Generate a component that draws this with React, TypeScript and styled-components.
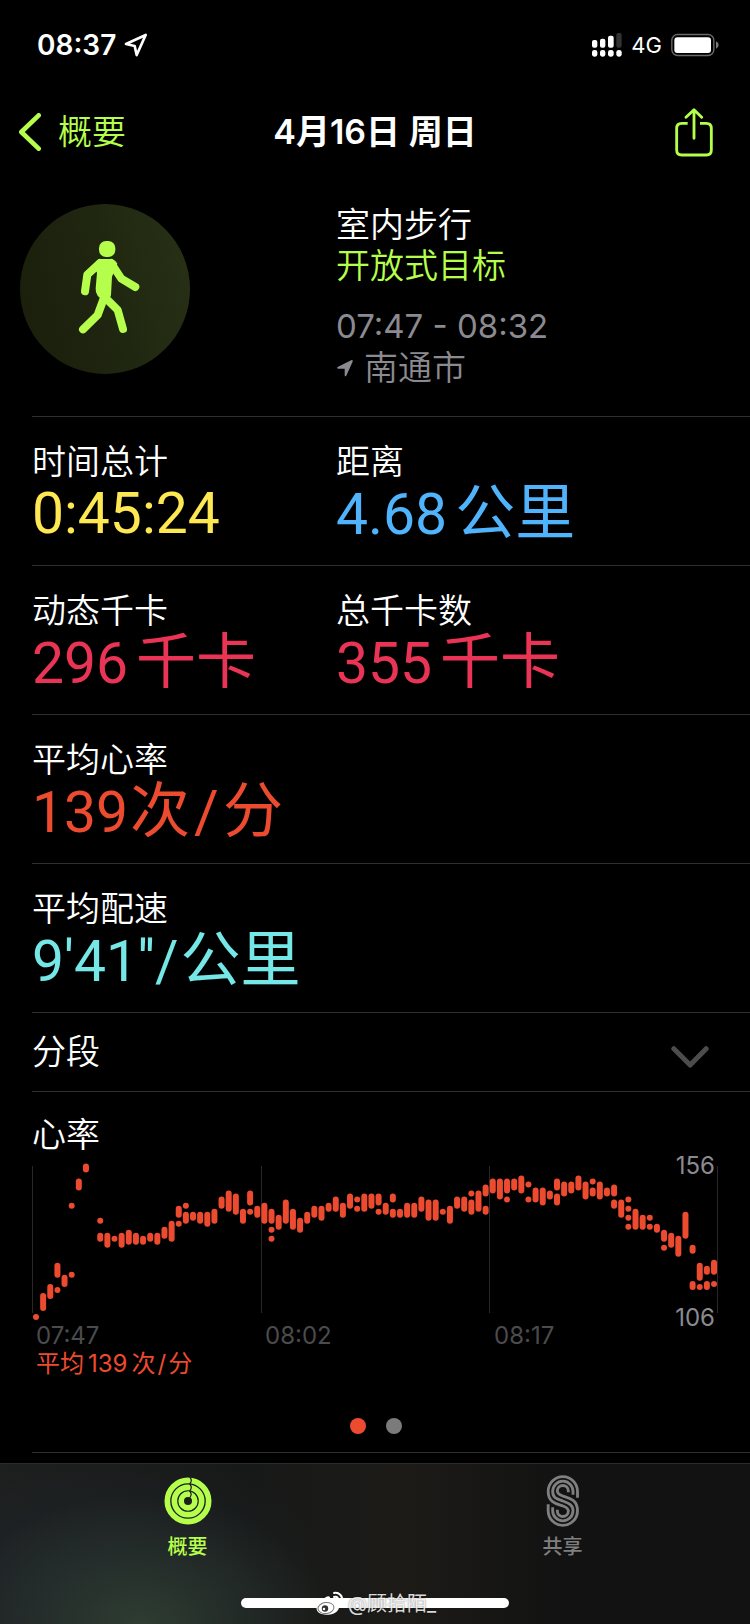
import React from "react";
import styled, { createGlobalStyle } from "styled-components";

const color = {
  lime: "#b5fe4b",
  white: "#ffffff",
  gray: "#8b8a90",
  dim: "#4b4b4d",
  line: "#2f2f31",
  yellow: "#fde752",
  blue: "#50b4fd",
  pink: "#e93455",
  red: "#ed4b2f",
  cyan: "#75e7e6",
};

const GlobalStyle = createGlobalStyle`
  * { box-sizing: border-box; }
  body {
    margin: 0;
    background: #000;
    color: #fff;
    font-family: Inter, "Noto Sans CJK SC", sans-serif;
    font-weight: 400;
  }
  button { font: inherit; border: 0; padding: 0; background: none; cursor: pointer; }
  h1, h2, p, dl, dt, dd { margin: 0; font-weight: inherit; }
`;

const Page = styled.div`
  min-height: 100vh;
  display: flex;
  flex-direction: column;
  background: #000;
`;

const StatusBar = styled.div`
  height: 90px;
  padding: 0 31px 0 37px;
  display: flex;
  align-items: center;
  justify-content: space-between;
`;

const StatusGroup = styled.div<{ $gap: number }>`
  display: flex;
  align-items: center;
  gap: ${(p) => p.$gap}px;
`;

const Clock = styled.span`
  font-size: 28px;
  font-weight: 600;
`;

const Network = styled.span`
  font-size: 22px;
  font-weight: 400;
`;

const NavBar = styled.header`
  height: 84px;
  padding: 0 19px;
  display: grid;
  grid-template-columns: 1fr auto 1fr;
  align-items: center;
`;

const BackLink = styled.a`
  display: flex;
  align-items: center;
  gap: 17px;
  color: ${color.lime};
  font-size: 34px;
  font-weight: 350;
  line-height: 40px;
  text-decoration: none;
`;

const Title = styled.h1`
  font-size: 34px;
  font-weight: 600;
  line-height: 40px;
`;

const ShareButton = styled.button`
  justify-self: end;
  margin-right: 18px;
  display: flex;
`;

const Summary = styled.section`
  padding: 30px 20px 28px;
  display: grid;
  grid-template-columns: 316px 1fr;
`;

const Badge = styled.div`
  width: 170px;
  height: 170px;
  border-radius: 50%;
  background: linear-gradient(75deg, #1a1e0a 0%, #1e240f 40%, #283216 100%);
`;

const SummaryText = styled.div`
  display: flex;
  flex-direction: column;
  font-size: 34px;
  font-weight: 350;
  line-height: 41px;
`;

const Goal = styled.p`
  color: ${color.lime};
`;

const TimeRange = styled.p`
  margin-top: 20px;
  color: ${color.gray};
  font-size: 33px;
  font-weight: 400;
`;

const Place = styled.p`
  display: flex;
  align-items: center;
  gap: 10px;
  color: ${color.gray};
`;

const Inset = styled.div`
  margin-left: 32px;
  border-top: 1px solid ${color.line};
`;

const MetricRow = styled(Inset).attrs({ as: "dl" })`
  margin: 0 0 0 32px;
  padding: 25px 0 23px;
  display: grid;
  grid-template-columns: 304px 1fr;
`;

const MetricLabel = styled.dt`
  font-size: 34px;
  font-weight: 350;
  line-height: 40px;
`;

const MetricValue = styled.dd<{ $color: string; $tight?: boolean }>`
  height: 60px;
  display: flex;
  align-items: baseline;
  gap: ${(p) => (p.$tight ? 2 : 8)}px;
  color: ${(p) => p.$color};
  font-family: Roboto, "Noto Sans CJK SC", sans-serif;
  font-size: 57px;
  line-height: 64px;
  white-space: nowrap;
`;

const Unit = styled.span`
  display: flex;
  align-items: baseline;
  gap: 4px;
  font-size: 60px;
`;

const SplitsButton = styled.button`
  width: 100%;
  height: 78px;
  padding: 0 41px 0 0;
  display: flex;
  align-items: center;
  justify-content: space-between;
  color: #fff;
  font-size: 34px;
  font-weight: 350;
  line-height: 40px;

  svg { margin-top: 10px; }
`;

const ChartSection = styled(Inset).attrs({ as: "section" })`
  padding: 23px 31px 18px 0;
`;

const ChartTitle = styled.h2`
  font-size: 34px;
  font-weight: 350;
  line-height: 40px;
`;

const Plot = styled.div`
  position: relative;
  margin-top: 5px;

  svg {
    display: block;
    width: 100%;
    height: auto;
    overflow: visible;
  }
`;

const ScaleLabel = styled.span<{ $edge: "top" | "bottom" }>`
  position: absolute;
  right: 4px;
  ${(p) => (p.$edge === "top" ? "top: -8px" : "bottom: -12px")};
  color: ${color.gray};
  font-size: 24px;
  line-height: 28px;
`;

const TimeAxis = styled.div`
  margin-top: 2px;
  display: grid;
  grid-template-columns: repeat(3, 1fr);
  color: ${color.dim};
  font-size: 24px;
  line-height: 28px;

  span { padding-left: 4px; }
`;

const Average = styled.p`
  padding-left: 4px;
  display: flex;
  gap: 4px;
  color: ${color.red};
  font-size: 24px;
  line-height: 28px;
`;

const AverageUnit = styled.span`
  display: flex;
  gap: 2px;
`;

const Pager = styled.div`
  margin: 40px 0 0;
  display: flex;
  justify-content: center;
  gap: 20px;
`;

const PagerDot = styled.button<{ $active?: boolean }>`
  width: 16px;
  height: 16px;
  border-radius: 50%;
  background: ${(p) => (p.$active ? color.red : "#7b7b7b")};
`;

const ListEnd = styled(Inset)`
  height: 11px;
`;

const TabBar = styled.footer`
  position: relative;
  margin-top: auto;
  padding: 11px 0 16px;
  border-top: 1px solid #2b2b2b;
  background:
    radial-gradient(ellipse 190px 130px at 140px 100%, #2e3c31 0%, rgba(43, 56, 48, 0.6) 45%, rgba(40, 50, 46, 0) 100%),
    radial-gradient(ellipse 260px 150px at 70px 75%, rgba(31, 36, 42, 0.9) 0%, rgba(31, 36, 42, 0) 100%),
    linear-gradient(90deg, #1d1e1c 0%, #171918 33%, #1c1b18 54%, #121212 75%, #121212 100%);
`;

const Tabs = styled.nav`
  display: grid;
  grid-template-columns: 1fr 1fr;
`;

const Tab = styled.a<{ $active?: boolean }>`
  display: flex;
  flex-direction: column;
  align-items: center;
  gap: 8px;
  color: ${(p) => (p.$active ? color.lime : "#7f7f7f")};
  font-size: 20px;
  font-weight: 500;
  line-height: 24px;
  text-decoration: none;
`;

const HomeIndicator = styled.div`
  width: 268px;
  height: 10px;
  margin: 39px auto 0;
  border-radius: 5px;
  background: #fff;
`;

const Watermark = styled.div`
  position: absolute;
  left: 0;
  right: 0;
  bottom: 6px;
  display: flex;
  align-items: center;
  justify-content: center;
  gap: 4px;
  color: rgba(255, 255, 255, 0.85);
  font-size: 20px;
  line-height: 28px;
  text-shadow: 0 0 2px rgba(0, 0, 0, 0.55);
`;

/* Heart-rate samples in beats per minute: each bucket holds [low, high] ranges. */
const samples: number[][][] = [
  [[106, 106]], [[109, 113]], [[113, 116]], [[120, 123], [115, 115]], [[117, 119]],
  [[120, 120], [143, 143]], [[149, 151]], [[155, 156]], [], [[132, 133], [138, 138]],
  [[130, 133]], [[132, 132]], [[130, 133]], [[131, 134]], [[131, 133]],
  [[131, 132]], [[132, 133]], [[131, 133]], [[133, 135]], [[132, 137]],
  [[140, 142], [137, 137]], [[138, 140], [143, 143]], [[139, 140]], [[138, 140]], [[137, 140]],
  [[138, 141]], [[143, 145]], [[142, 147]], [[141, 146]], [[138, 141]],
  [[144, 147], [141, 141]], [[140, 142]], [[138, 143]], [[138, 141], [135, 135], [132, 132]], [[136, 139]],
  [[138, 144]], [[136, 141]], [[135, 138]], [[138, 140]], [[140, 142]],
  [[139, 142]], [[142, 143]], [[142, 145]], [[140, 143]], [[143, 146]],
  [[145, 145], [142, 142]], [[142, 146]], [[143, 146]], [[144, 146], [141, 141]], [[141, 143]],
  [[145, 146], [140, 141]], [[140, 141]], [[140, 143]], [[140, 143]], [[142, 145]],
  [[139, 144]], [[139, 144]], [[141, 141]], [[138, 142]], [[143, 145]],
  [[142, 145]], [[147, 147], [141, 144]], [[142, 147]], [[147, 149], [141, 142]], [[148, 151]],
  [[146, 151]], [[148, 151], [145, 145]], [[149, 151]], [[148, 152]], [[150, 150], [145, 145]],
  [[145, 148]], [[144, 148]], [[146, 147]], [[149, 151], [144, 146]], [[147, 150]],
  [[148, 150]], [[149, 152]], [[146, 150]], [[151, 151], [147, 148]], [[146, 150]],
  [[147, 148]], [[147, 149], [143, 144]], [[140, 144]], [[145, 145], [142, 142], [139, 139], [136, 136]], [[136, 141]],
  [[136, 139]], [[139, 139], [136, 136]], [[135, 136]], [[132, 134], [129, 129]], [[130, 133]],
  [[127, 132]], [[133, 140]], [[128, 129], [116, 117]], [[119, 123], [116, 116]], [[121, 122], [116, 117]],
  [[121, 124], [117, 117]],
];

const rateToY = (bpm: number) => 157 - (bpm - 106) * 3.01;

function HeartRateChart() {
  return (
    <svg viewBox="0 0 687 160" role="img" aria-label="心率">
      {[0, 229, 457, 685].map((x) => (
        <rect key={x} x={x} y={6} width={1} height={147} fill="#29292a" />
      ))}
      {samples.map((ranges, i) =>
        ranges.map(([low, high]) => (
          <rect
            key={`${i}-${low}`}
            x={1 + i * 7.137}
            y={rateToY(high) - 3}
            width={6}
            height={rateToY(low) - rateToY(high) + 6}
            rx={3}
            fill={color.red}
          />
        ))
      )}
    </svg>
  );
}

function LocationOutline() {
  return (
    <svg width="24" height="24" viewBox="372 101 72 72" fill="none" stroke="#fff" strokeWidth="8" strokeLinejoin="round">
      <path d="M378 134 437 107 410 167 404 140Z" />
    </svg>
  );
}

function SignalBars() {
  return (
    <svg width="30" height="24" viewBox="655 100 90 72" fill="#fff">
      <rect x="655" y="121" width="16" height="23" rx="6" />
      <rect x="679" y="117" width="16" height="27" rx="6" />
      <rect x="703" y="108" width="17" height="36" rx="6" />
      <rect x="728" y="100" width="16" height="44" rx="6" fill="#333" />
      <rect x="655" y="151" width="16" height="20" rx="7" />
      <rect x="679" y="151" width="16" height="20" rx="7" />
      <rect x="703" y="151" width="17" height="20" rx="7" />
      <rect x="728" y="151" width="16" height="20" rx="7" />
    </svg>
  );
}

function Battery() {
  return (
    <svg width="48" height="24" viewBox="889 98 144 72">
      <rect x="891.5" y="102.5" width="126" height="63" rx="17" fill="none" stroke="#6a6a6a" strokeWidth="4" />
      <rect x="899" y="111" width="110" height="47" rx="9" fill="#fff" />
      <path d="M1024 123q8 3 8 11t-8 11Z" fill="#7a7a7a" />
    </svg>
  );
}

function BackChevron() {
  return (
    <svg width="22" height="38" viewBox="57 339 66 114" fill="none" stroke={color.lime} strokeWidth="14" strokeLinecap="round" strokeLinejoin="round">
      <path d="M116 346 64 396l52 50" />
    </svg>
  );
}

function ShareIcon() {
  return (
    <svg width="38" height="49" viewBox="900 320 114 147" fill="none" stroke={color.lime} strokeWidth="8.5">
      <path d="M938 366H920Q905 366 905 381V446Q905 461 920 461H994Q1009 461 1009 446V381Q1009 366 994 366H975" />
      <path d="M957 411V327M933 348 957 325 980 348" strokeLinecap="round" strokeLinejoin="round" />
    </svg>
  );
}

function Walker() {
  return (
    <svg width="170" height="170" viewBox="60 72 510 510" fill="none" stroke={color.lime} strokeWidth="24" strokeLinecap="round" strokeLinejoin="round">
      <rect x="297" y="183" width="49" height="48" rx="21" fill={color.lime} stroke="none" />
      <path d="M300 237H333Q345 239 352 251L336 290 333 345Q331 356 316 358 301 358 293 347 286 338 287 325L291 278 280 258Q290 238 300 237Z" fill={color.lime} stroke="none" />
      <path d="M300 249 262 284 255 334" />
      <path d="M333 249 364 296 406 321" />
      <path d="M314 348 293 405 249 448" />
      <path d="M315 352 353 390 369 447" />
    </svg>
  );
}

function LocationFilled() {
  return (
    <svg width="18" height="18" viewBox="1011 538 52 56" fill={color.gray}>
      <path d="M1014 563 1056 542Q1062 540 1061 546L1041 590Q1037 594 1036 589V568L1015 568Q1010 566 1014 563Z" />
    </svg>
  );
}

function ExpandChevron() {
  return (
    <svg width="38" height="22" viewBox="543 18 113 66" fill="none" stroke="#4c4c4e" strokeWidth="15" strokeLinecap="round" strokeLinejoin="round">
      <path d="M551 26 600 75 648 26" />
    </svg>
  );
}

function RingsIcon() {
  return (
    <svg width="48" height="52" viewBox="490 257 144 156" fill="none">
      <g stroke={color.lime} strokeWidth="17">
        <circle cx="562" cy="335" r="62" />
        <circle cx="562" cy="335" r="41" />
        <circle cx="562" cy="335" r="20.5" />
      </g>
      <g stroke="#171a1a" strokeWidth="3.5">
        <path d="M567 263Q577 273 567 284" />
        <path d="M567 284Q577 294 567 305" />
        <path d="M567 305Q576 315 567 325" />
      </g>
    </svg>
  );
}

function SharingIcon() {
  return (
    <svg width="34" height="52" viewBox="511 255 102 156" fill="none" stroke="#7f7f7f" strokeWidth="8.5">
      <path d="M605.5 323V304A44 44 0 0 0 517.5 304C517.5 340 546 342 562 348 575 353 578 357 578 363A16 16 0 0 1 545 363V359" />
      <path d="M592 314V304A30.5 30.5 0 0 0 531 304C531 326 546 327 561.5 333 577 339 592 343 592 362A30.5 30.5 0 0 1 531 362V352" />
      <path d="M517.5 343V362A44 44 0 0 0 605.5 362C605.5 326 577 324 561 318 548 313 545 309 545 303A16 16 0 0 1 578 303V307" />
    </svg>
  );
}

function WeiboIcon() {
  return (
    <svg width="30" height="26" viewBox="0 0 30 26" fill="none">
      <path d="M12 6C15 4 17 6 16 9c4-2 7 0 6 3 4 1 4 4 2 7-4 6-16 6-20 2-4-4 1-11 8-15Z" fill="#fff" />
      <ellipse cx="12" cy="17" rx="8" ry="5.5" stroke="#777" transform="rotate(-8 12 17)" />
      <circle cx="11" cy="17.5" r="3.2" fill="#333" />
      <circle cx="10" cy="18" r="1.2" fill="#fff" />
      <path d="M20 2c5-1 9 3 8 8M20 6c3-1 5 1 4 4" stroke="#fff" strokeWidth="2" strokeLinecap="round" />
    </svg>
  );
}

type MetricProps = { label: string; value: string; unit?: string[]; tone: string; tight?: boolean };

function Metric({ label, value, unit, tone, tight }: MetricProps) {
  return (
    <div>
      <MetricLabel>{label}</MetricLabel>
      <MetricValue $color={tone} $tight={tight}>
        {value}
        {unit && (
          <Unit>
            {unit.map((part) => (
              <span key={part}>{part}</span>
            ))}
          </Unit>
        )}
      </MetricValue>
    </div>
  );
}

export default function App() {
  return (
    <Page>
      <GlobalStyle />
      <StatusBar>
        <StatusGroup $gap={8}>
          <Clock>08:37</Clock>
          <LocationOutline />
        </StatusGroup>
        <StatusGroup $gap={9}>
          <SignalBars />
          <Network>4G</Network>
          <Battery />
        </StatusGroup>
      </StatusBar>

      <NavBar>
        <BackLink href="#summary">
          <BackChevron />
          概要
        </BackLink>
        <Title>4月16日 周日</Title>
        <ShareButton aria-label="分享">
          <ShareIcon />
        </ShareButton>
      </NavBar>

      <main>
        <Summary>
          <Badge>
            <Walker />
          </Badge>
          <SummaryText>
            <p>室内步行</p>
            <Goal>开放式目标</Goal>
            <TimeRange>07:47 - 08:32</TimeRange>
            <Place>
              <LocationFilled />
              南通市
            </Place>
          </SummaryText>
        </Summary>

        <MetricRow>
          <Metric label="时间总计" value="0:45:24" tone={color.yellow} />
          <Metric label="距离" value="4.68" unit={["公里"]} tone={color.blue} />
        </MetricRow>
        <MetricRow>
          <Metric label="动态千卡" value="296" unit={["千卡"]} tone={color.pink} />
          <Metric label="总千卡数" value="355" unit={["千卡"]} tone={color.pink} />
        </MetricRow>
        <MetricRow>
          <Metric label="平均心率" value="139" unit={["次", "/", "分"]} tone={color.red} tight />
        </MetricRow>
        <MetricRow>
          <Metric label="平均配速" value={"9'41''/"} unit={["公里"]} tone={color.cyan} tight />
        </MetricRow>

        <Inset>
          <SplitsButton aria-expanded={false}>
            分段
            <ExpandChevron />
          </SplitsButton>
        </Inset>

        <ChartSection>
          <ChartTitle>心率</ChartTitle>
          <Plot>
            <HeartRateChart />
            <ScaleLabel $edge="top">156</ScaleLabel>
            <ScaleLabel $edge="bottom">106</ScaleLabel>
          </Plot>
          <TimeAxis>
            <span>07:47</span>
            <span>08:02</span>
            <span>08:17</span>
          </TimeAxis>
          <Average>
            <span>平均</span>
            <span>139</span>
            <AverageUnit>
              <span>次</span>
              <span>/</span>
              <span>分</span>
            </AverageUnit>
          </Average>
          <Pager>
            <PagerDot $active aria-label="1" />
            <PagerDot aria-label="2" />
          </Pager>
        </ChartSection>
        <ListEnd />
      </main>

      <TabBar>
        <Tabs>
          <Tab href="#summary" $active>
            <RingsIcon />
            概要
          </Tab>
          <Tab href="#sharing">
            <SharingIcon />
            共享
          </Tab>
        </Tabs>
        <HomeIndicator />
        <Watermark>
          <WeiboIcon />
          @顾拾陌_
        </Watermark>
      </TabBar>
    </Page>
  );
}
